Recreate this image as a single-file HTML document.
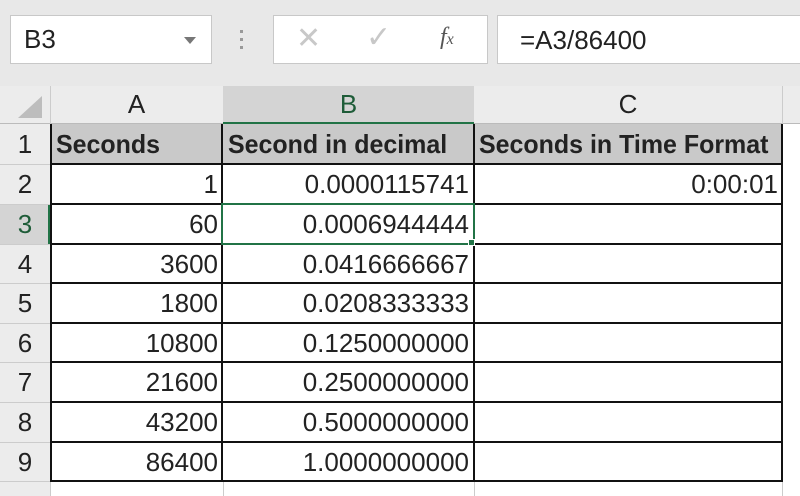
<!DOCTYPE html><html><head><style>
body{margin:0;width:800px;height:496px;overflow:hidden;background:#fff;font-family:"Liberation Sans",sans-serif;position:relative}
.a{position:absolute;box-sizing:border-box}
.t{font-size:26px;color:#222;line-height:40px;white-space:nowrap;transform:scaleX(1.0)}
.r{text-align:right;transform-origin:right}
.l{transform-origin:left}
.b{font-weight:bold;transform:scaleX(0.96)}
</style></head><body>
<div class="a" style="left:0;top:0;width:800px;height:86px;background:#e8e8e8"></div>
<div class="a" style="left:10px;top:15px;width:202px;height:49px;background:#fff;border:1px solid #c8c8c8"></div>
<div class="a t l" style="left:24px;top:19px">B3</div>
<div class="a" style="left:184px;top:37px;width:0;height:0;border-left:6px solid transparent;border-right:6px solid transparent;border-top:7px solid #777"></div>
<div class="a" style="left:240px;top:30px;width:3px;height:22px;background:repeating-linear-gradient(#999 0 3px,transparent 3px 8px)"></div>
<div class="a" style="left:273px;top:15px;width:215px;height:49px;background:#fff;border:1px solid #c8c8c8"></div>
<div class="a" style="left:296px;top:21px;font-size:30px;color:#c8c8c8">✕</div>
<div class="a" style="left:366px;top:20px;font-size:30px;color:#c8c8c8">✓</div>
<div class="a" style="left:440px;top:24px;font-size:24px;color:#555;font-style:italic;font-family:'Liberation Serif',serif">f<span style="font-size:16px">x</span></div>
<div class="a" style="left:497px;top:15px;width:310px;height:49px;background:#fff;border:1px solid #c8c8c8"></div>
<div class="a t l" style="left:520px;top:20px">=A3/86400</div>
<div class="a" style="left:0;top:86px;width:800px;height:38px;background:#ececec;border-bottom:1px solid #bbb"></div>
<div class="a" style="left:223px;top:86px;width:251px;height:38px;background:#d4d4d4;border-bottom:2px solid #217346"></div>
<div class="a" style="left:18px;top:96px;width:0;height:0;border-left:24px solid transparent;border-bottom:22px solid #bdbdbd"></div>
<div class="a" style="left:50px;top:86px;width:1px;height:410px;background:#ccc"></div>
<div class="a" style="left:782px;top:86px;width:1px;height:410px;background:#ccc"></div>
<div class="a t" style="left:50px;top:84px;width:173px;text-align:center">A</div>
<div class="a t" style="left:223px;top:84px;width:251px;text-align:center;color:#1e5c38">B</div>
<div class="a t" style="left:474px;top:84px;width:308px;text-align:center">C</div>
<div class="a" style="left:0;top:124px;width:50px;height:372px;background:#ececec"></div>
<div class="a" style="left:0;top:204px;width:50px;height:40px;background:#d4d4d4;border-right:2px solid #217346"></div>
<div class="a" style="left:783px;top:124px;width:17px;height:372px;background:#fff"></div>
<div class="a" style="left:50px;top:124px;width:424px;height:40px;background:#c9c9c9"></div>
<div class="a" style="left:474px;top:124px;width:308px;height:40px;background:#c9c9c9"></div>
<div class="a" style="left:50px;top:124px;width:733px;height:358px;border:2px solid #111;border-top:none"></div>
<div class="a" style="left:221px;top:124px;width:2px;height:358px;background:#111"></div>
<div class="a" style="left:473px;top:124px;width:2px;height:358px;background:#111"></div>
<div class="a" style="left:50px;top:163px;width:733px;height:2px;background:#111"></div>
<div class="a" style="left:50px;top:203px;width:733px;height:2px;background:#111"></div>
<div class="a" style="left:50px;top:243px;width:733px;height:2px;background:#111"></div>
<div class="a" style="left:50px;top:282px;width:733px;height:2px;background:#111"></div>
<div class="a" style="left:50px;top:322px;width:733px;height:2px;background:#111"></div>
<div class="a" style="left:50px;top:361px;width:733px;height:2px;background:#111"></div>
<div class="a" style="left:50px;top:401px;width:733px;height:2px;background:#111"></div>
<div class="a" style="left:50px;top:441px;width:733px;height:2px;background:#111"></div>
<div class="a" style="left:0;top:164px;width:50px;height:1px;background:#ccc"></div>
<div class="a" style="left:0;top:204px;width:50px;height:1px;background:#ccc"></div>
<div class="a" style="left:0;top:244px;width:50px;height:1px;background:#ccc"></div>
<div class="a" style="left:0;top:283px;width:50px;height:1px;background:#ccc"></div>
<div class="a" style="left:0;top:323px;width:50px;height:1px;background:#ccc"></div>
<div class="a" style="left:0;top:362px;width:50px;height:1px;background:#ccc"></div>
<div class="a" style="left:0;top:402px;width:50px;height:1px;background:#ccc"></div>
<div class="a" style="left:0;top:442px;width:50px;height:1px;background:#ccc"></div>
<div class="a" style="left:0;top:481px;width:50px;height:1px;background:#ccc"></div>
<div class="a" style="left:223px;top:482px;width:1px;height:14px;background:#ccc"></div>
<div class="a" style="left:474px;top:482px;width:1px;height:14px;background:#ccc"></div>
<div class="a" style="left:221px;top:203px;width:254px;height:42px;border:2px solid #217346"></div>
<div class="a" style="left:468px;top:239px;width:7px;height:7px;background:#217346;border:1px solid #fff"></div>
<div class="a t" style="left:0;top:124px;width:50px;text-align:center">1</div>
<div class="a t" style="left:0;top:164px;width:50px;text-align:center">2</div>
<div class="a t" style="left:0;top:204px;width:50px;text-align:center;color:#1e5c38">3</div>
<div class="a t" style="left:0;top:244px;width:50px;text-align:center">4</div>
<div class="a t" style="left:0;top:283px;width:50px;text-align:center">5</div>
<div class="a t" style="left:0;top:323px;width:50px;text-align:center">6</div>
<div class="a t" style="left:0;top:362px;width:50px;text-align:center">7</div>
<div class="a t" style="left:0;top:402px;width:50px;text-align:center">8</div>
<div class="a t" style="left:0;top:442px;width:50px;text-align:center">9</div>
<div class="a t l b" style="left:56px;top:124px">Seconds</div>
<div class="a t l b" style="left:228px;top:124px">Second in decimal</div>
<div class="a t l b" style="left:479px;top:124px">Seconds in Time Format</div>
<div class="a t r" style="right:582px;top:164px">1</div>
<div class="a t r" style="right:582px;top:204px">60</div>
<div class="a t r" style="right:582px;top:244px">3600</div>
<div class="a t r" style="right:582px;top:283px">1800</div>
<div class="a t r" style="right:582px;top:323px">10800</div>
<div class="a t r" style="right:582px;top:362px">21600</div>
<div class="a t r" style="right:582px;top:402px">43200</div>
<div class="a t r" style="right:582px;top:442px">86400</div>
<div class="a t r" style="right:331px;top:164px">0.0000115741</div>
<div class="a t r" style="right:331px;top:204px">0.0006944444</div>
<div class="a t r" style="right:331px;top:244px">0.0416666667</div>
<div class="a t r" style="right:331px;top:283px">0.0208333333</div>
<div class="a t r" style="right:331px;top:323px">0.1250000000</div>
<div class="a t r" style="right:331px;top:362px">0.2500000000</div>
<div class="a t r" style="right:331px;top:402px">0.5000000000</div>
<div class="a t r" style="right:331px;top:442px">1.0000000000</div>
<div class="a t r" style="right:22px;top:164px">0:00:01</div>
</body></html>
